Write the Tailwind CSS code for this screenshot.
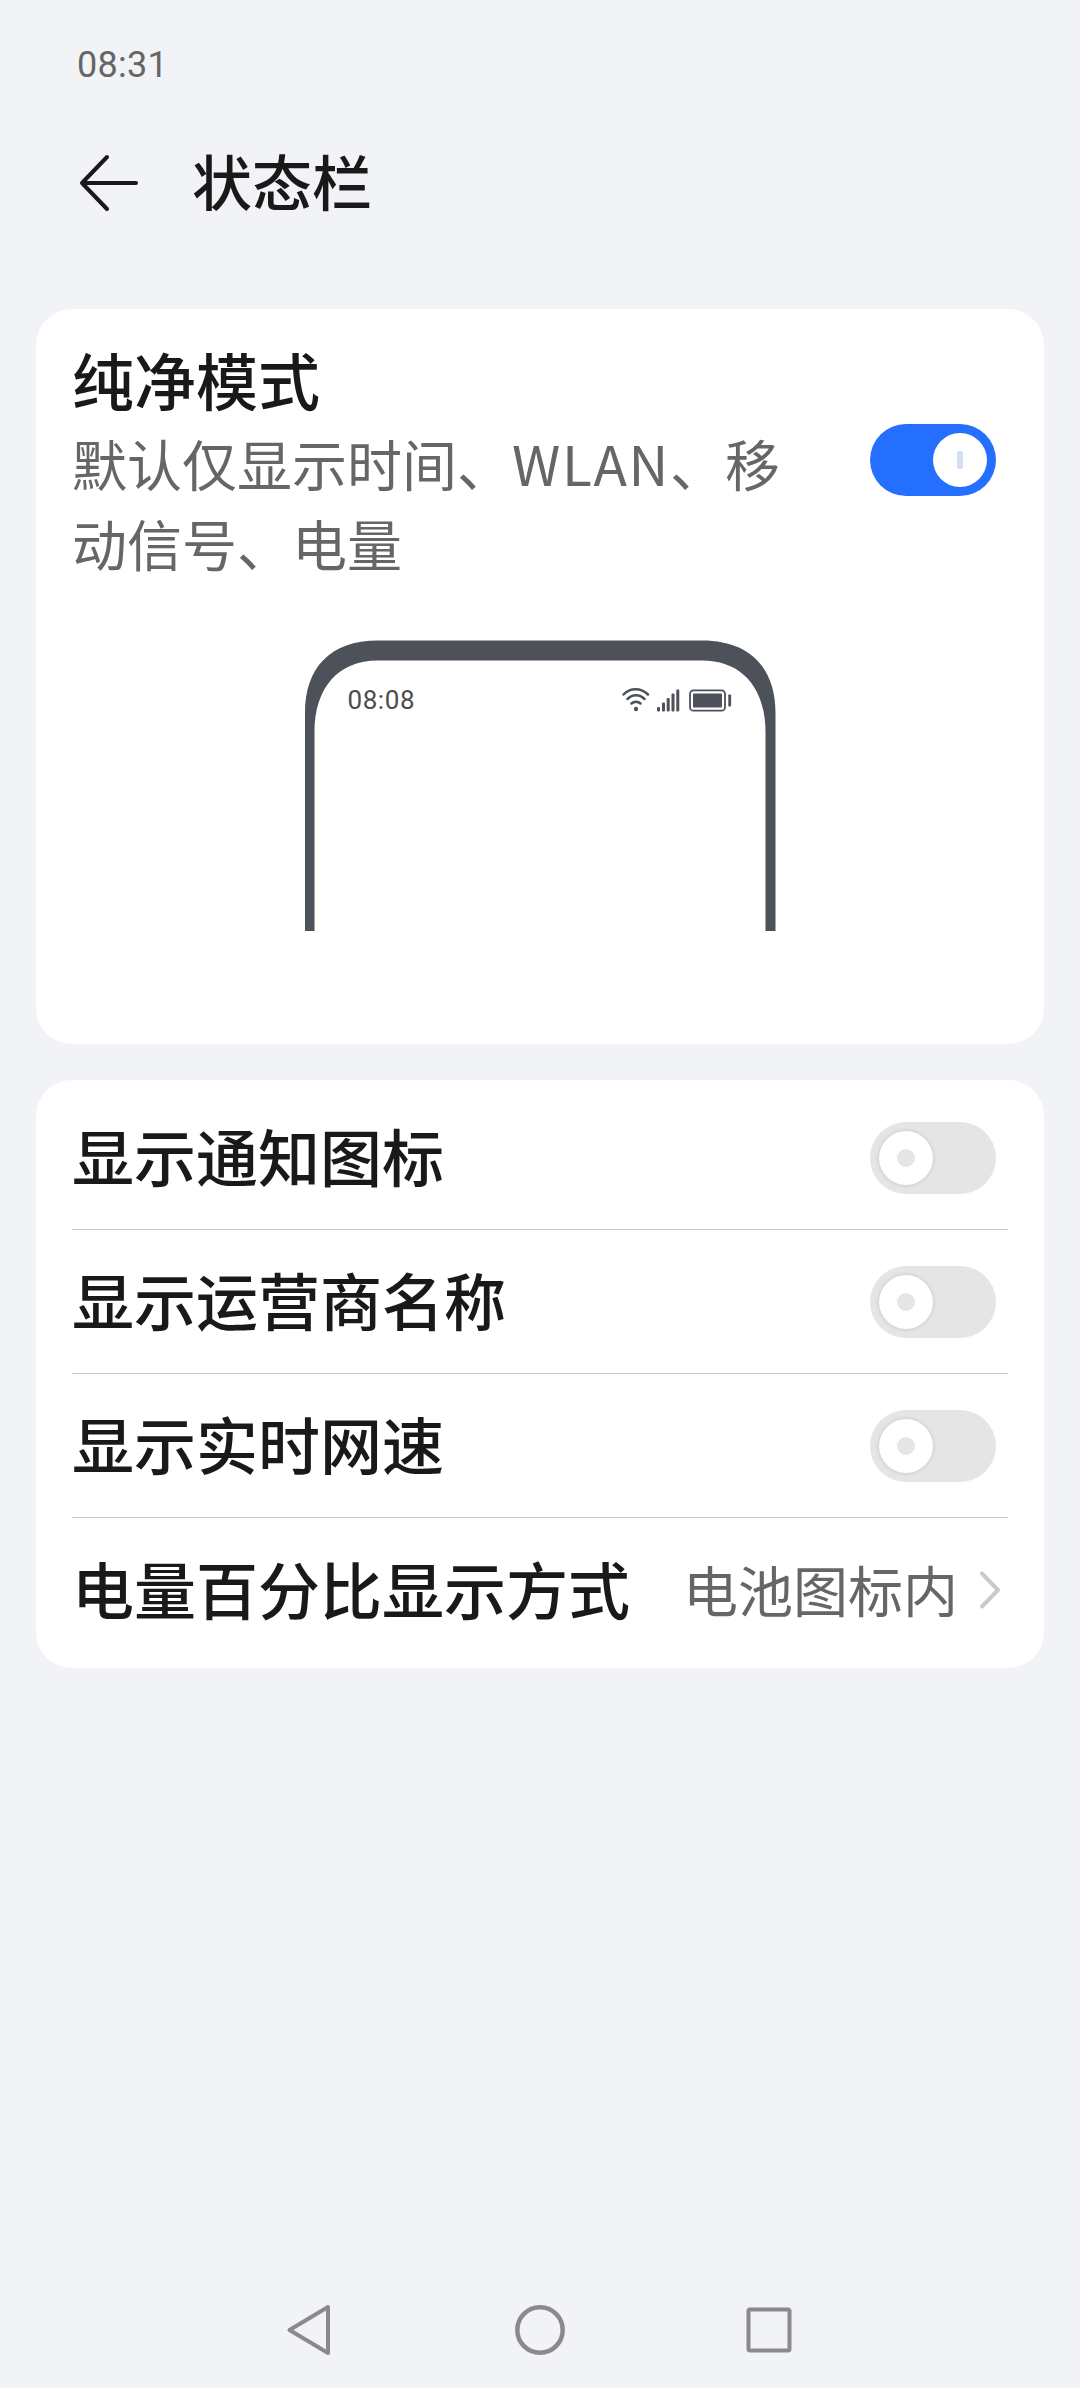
<!DOCTYPE html>
<html lang="zh-CN">
<head>
  <meta charset="UTF-8" />
  <title>状态栏</title>
  <script src="https://cdn.jsdelivr.net/npm/@tailwindcss/browser@4"></script>
</head>
<body class="bg-[#f1f3f7] font-['Noto_Sans_CJK_SC',sans-serif] text-[#191919]">
  <div class="flex flex-col w-[1080px] h-[2388px] overflow-hidden">

    <!-- System status bar -->
    <div class="h-[128px] shrink-0 pl-[77px] pt-[2px] flex items-center font-['Roboto',sans-serif] text-[36px] leading-none text-[#666]">
      <span class="tracking-[0.3px]">08:31</span>
    </div>

    <!-- Page header -->
    <header class="h-[181px] shrink-0 flex items-start pl-[78px] gap-[52px] pt-[25px]">
      <svg class="w-[62px] h-[60px]" viewBox="0 0 62 60" fill="none" stroke="#191919" stroke-width="4" stroke-linecap="round" stroke-linejoin="round">
        <path d="M29 4 L4 30 L29 56 M4 30 H58" />
      </svg>
      <h1 class="text-[60px] leading-[60px] font-medium -mt-[3px]">状态栏</h1>
    </header>

    <main class="flex flex-col gap-9 px-9">
      <!-- Pure mode -->
      <section class="h-[735px] bg-white rounded-[36px] flex flex-col">
        <div class="flex pl-9 pt-[30px] justify-between">
          <div class="w-[730px]">
            <h2 class="text-[62px] leading-[80px] font-medium">纯净模式</h2>
            <p class="text-[55px] leading-[80px] mt-[3px] text-[#666]">默认仅显示时间、<span class="tracking-[1.6px]">WLAN</span>、移动信号、电量</p>
          </div>
          <div class="w-[126px] h-[72px] mt-[85px] mr-12 rounded-full bg-[#256fff] flex items-center justify-end pr-[9px]">
            <div class="size-[54px] rounded-full bg-white flex items-center justify-center">
              <div class="w-[6px] h-[18px] rounded-[2px] bg-[#d3def8]"></div>
            </div>
          </div>
        </div>

        <!-- Phone preview -->
        <svg class="w-[472px] h-[292px] mt-[58px] self-center" viewBox="304 640 472 292">
          <path fill="#4d5159" d="M305 931 V713 C305 668 330 640.5 378 640.5 H702 C750 640.5 775.500 668 775.500 713 V931 H765.500 V732 C765.500 688 742 660.500 702 660.500 H378 C338 660.500 314.500 688 314.500 732 V931 Z" />
          <text x="347.500" y="709" font-family="Roboto" font-size="26" fill="#4d4d4d" textLength="67">08:08</text>
          <g fill="none" stroke="#4d5159" stroke-width="2.500" stroke-linecap="round">
            <path d="M623.500 694.500 C630 687.500 641 687.500 648 694.500" />
            <path d="M627.500 699 C632.500 694 639.500 694 644.500 699" />
            <path d="M631.500 703.500 C634 701 638 701 640.500 703.500" />
          </g>
          <g fill="#4d5159">
            <circle cx="636" cy="709" r="2.200" />
            <rect x="657" y="707" width="3" height="4.500" rx="1" />
            <rect x="662" y="702.500" width="3" height="9" rx="1" />
            <rect x="666.700" y="698" width="3" height="13.500" rx="1" />
            <rect x="671.500" y="693.500" width="3" height="18" rx="1" />
            <rect x="676.300" y="689.500" width="3" height="22" rx="1" />
            <rect x="693" y="693.500" width="29" height="14" rx="1" />
            <rect x="728.300" y="694.500" width="2.800" height="12" rx="0.800" />
          </g>
          <rect x="690" y="690.300" width="35" height="20.400" rx="3.500" fill="none" stroke="#4d5159" stroke-width="1.800" />
        </svg>
      </section>

      <!-- Options -->
      <section class="h-[588px] bg-white rounded-[36px] px-9 py-[6px] text-[62px] leading-[80px] font-medium">
        <div class="h-36 border-b border-[#c5c5c5] flex items-center justify-between pr-3">
          <span class="pb-[5px]">显示通知图标</span>
          <div class="w-[126px] h-[72px] rounded-full bg-[#e5e5e5] flex items-center pl-[9px]">
            <div class="size-[54px] rounded-full bg-white shadow-[0_0_4px_rgba(0,0,0,0.15)] flex items-center justify-center">
              <div class="size-[18px] rounded-full bg-[#e5e5e5]"></div>
            </div>
          </div>
        </div>
        <div class="h-36 border-b border-[#c5c5c5] flex items-center justify-between pr-3">
          <span class="pb-[5px]">显示运营商名称</span>
          <div class="w-[126px] h-[72px] rounded-full bg-[#e5e5e5] flex items-center pl-[9px]">
            <div class="size-[54px] rounded-full bg-white shadow-[0_0_4px_rgba(0,0,0,0.15)] flex items-center justify-center">
              <div class="size-[18px] rounded-full bg-[#e5e5e5]"></div>
            </div>
          </div>
        </div>
        <div class="h-36 border-b border-[#c5c5c5] flex items-center justify-between pr-3">
          <span class="pb-[5px]">显示实时网速</span>
          <div class="w-[126px] h-[72px] rounded-full bg-[#e5e5e5] flex items-center pl-[9px]">
            <div class="size-[54px] rounded-full bg-white shadow-[0_0_4px_rgba(0,0,0,0.15)] flex items-center justify-center">
              <div class="size-[18px] rounded-full bg-[#e5e5e5]"></div>
            </div>
          </div>
        </div>
        <div class="h-36 flex items-center justify-between pr-[6px]">
          <span class="pb-[5px]">电量百分比显示方式</span>
          <div class="flex items-center gap-5">
            <span class="pb-[5px] text-[55px] font-normal text-[#666]">电池图标内</span>
            <svg class="w-6 h-10" viewBox="0 0 24 40" fill="none" stroke="#cacaca" stroke-width="4" stroke-linecap="round" stroke-linejoin="round">
              <path d="M4 3.500 L20 20 L4 36.500" />
            </svg>
          </div>
        </div>
      </section>
    </main>

    <!-- Navigation keys -->
    <nav class="mt-auto mb-[31px] flex items-center justify-center gap-[175px]">
      <svg class="size-[54px]" viewBox="0 0 54 54" fill="none" stroke="#8a8a8a" stroke-width="4" stroke-linejoin="round">
        <path d="M44 4 V50 L5.500 27 Z" />
      </svg>
      <svg class="size-[54px]" viewBox="0 0 54 54" fill="none" stroke="#8a8a8a" stroke-width="4.500">
        <circle cx="27" cy="27" r="22.700" />
      </svg>
      <svg class="size-[54px]" viewBox="0 0 54 54" fill="none" stroke="#8a8a8a" stroke-width="4">
        <rect x="6.500" y="6.500" width="41" height="41" rx="1.500" />
      </svg>
    </nav>
  </div>
</body>
</html>
